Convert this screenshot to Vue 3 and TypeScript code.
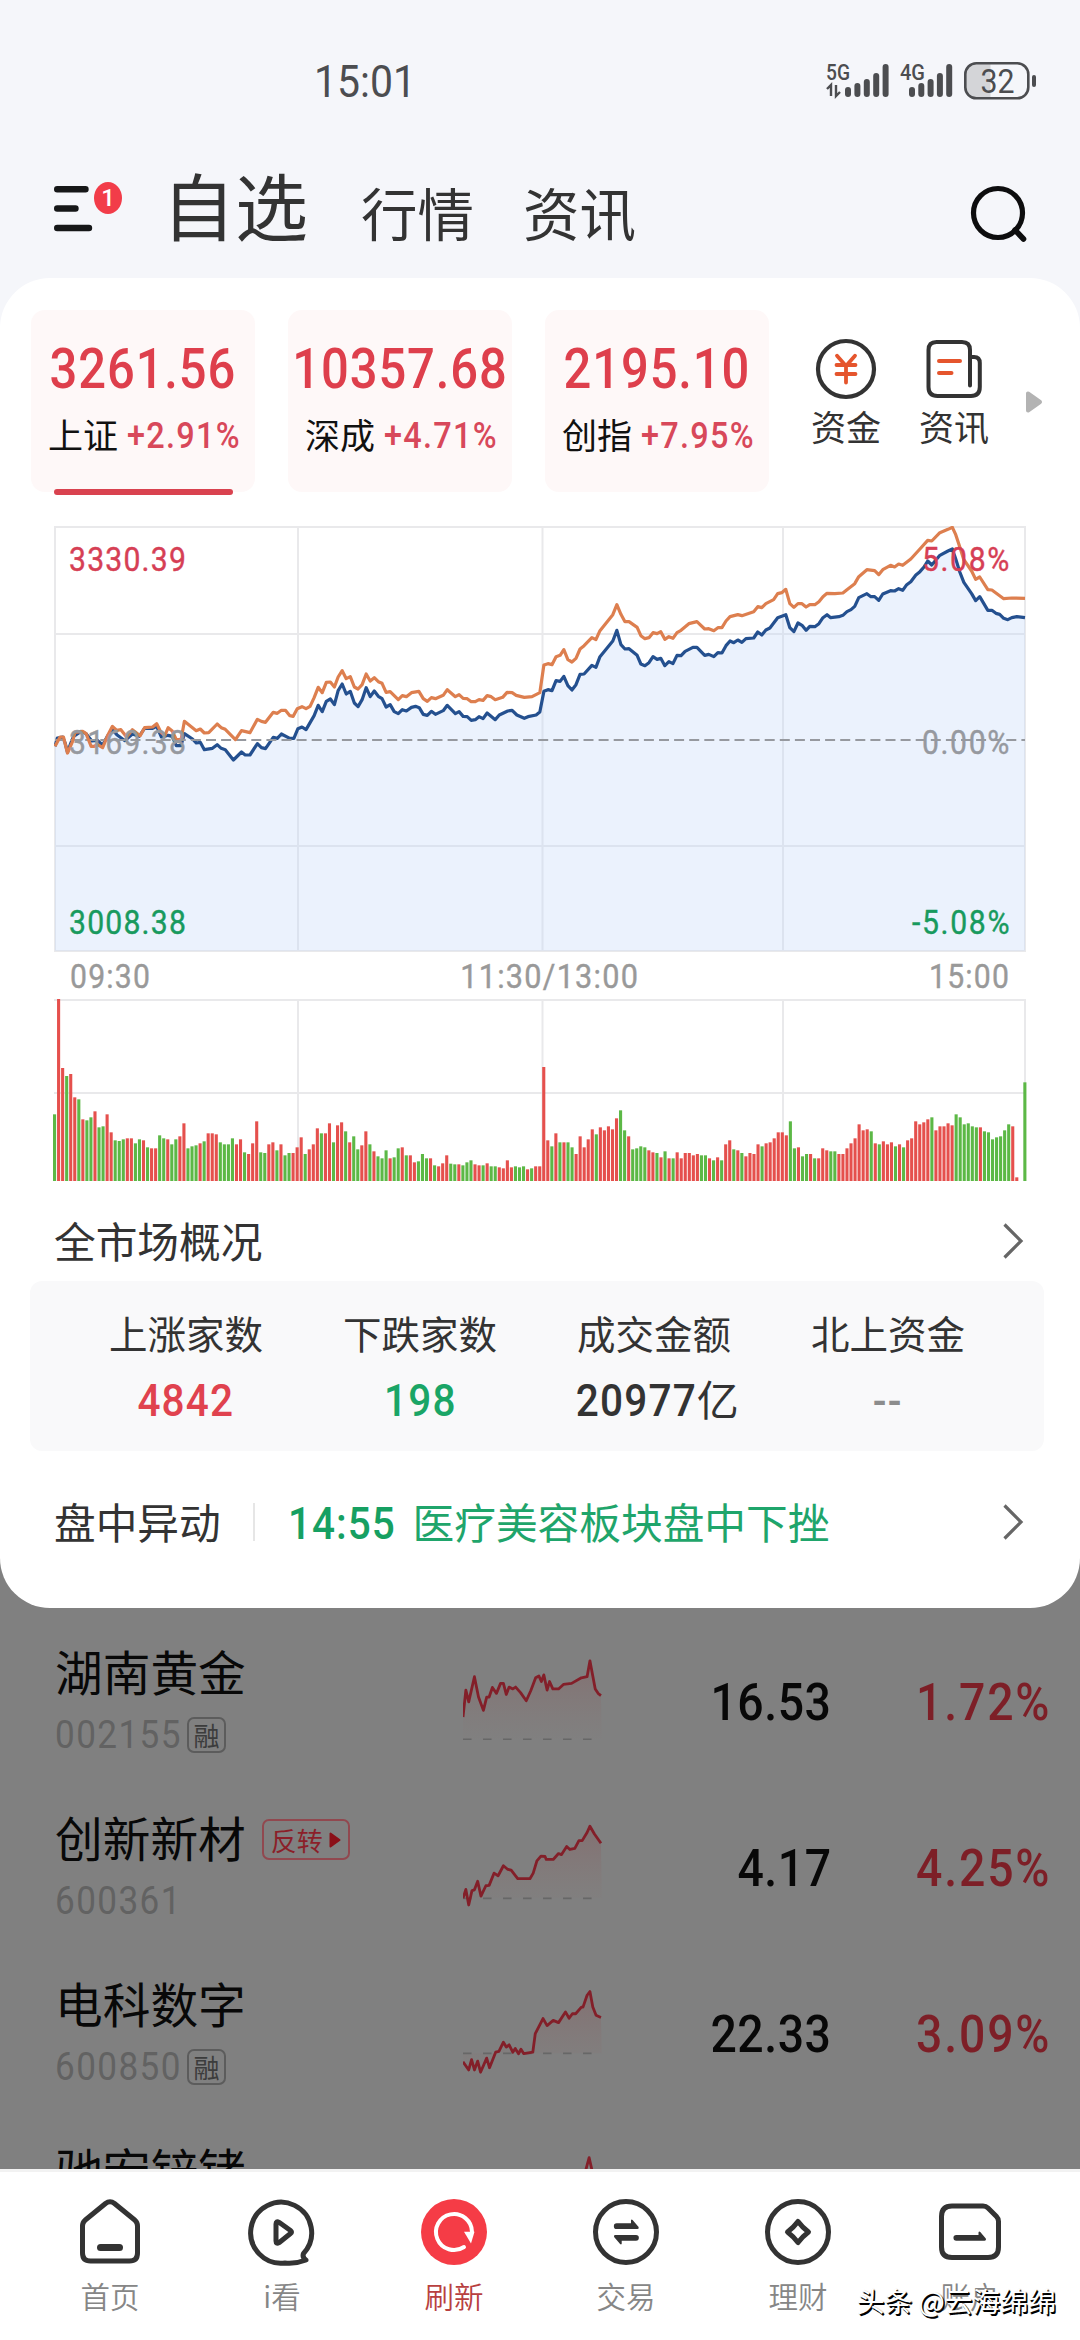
<script setup lang="ts">
interface IndexCard { value: string; name: string; change: string; active?: boolean }
interface Stat { label: string; value: string; unit?: string; tone: string }
interface Stock {
  name: string; code: string; margin?: boolean; tag?: string
  price: string; change: string; line: string; base: number
}

const indices: IndexCard[] = [
  { value: '3261.56', name: '上证', change: '+2.91%', active: true },
  { value: '10357.68', name: '深成', change: '+4.71%' },
  { value: '2195.10', name: '创指', change: '+7.95%' },
]

const stats: Stat[] = [
  { label: '上涨家数', value: '4842', tone: 'up' },
  { label: '下跌家数', value: '198', tone: 'down' },
  { label: '成交金额', value: '20977', unit: '亿', tone: 'flat' },
  { label: '北上资金', value: '--', tone: 'none' },
]

// Plot space of the intraday chart; the afternoon session is shifted to the right.
const AFTERNOON = 1479
function session(points: string, shift = 0): string {
  return points.trim().split(/\s+/).map((p) => {
    const [x, y] = p.split(',').map(Number)
    return `${x + shift},${y}`
  }).join(' ')
}

const blueMorning = '73,710 80,685 96,682 103,700 110,728 118,705 128,680 150,665 165,672 182,694 198,692 214,706 228,680 243,660 256,675 280,693 302,673 322,680 338,656 362,656 374,650 388,682 398,680 408,677 420,680 432,708 446,708 456,672 480,688 491,700 503,698 515,720 539,716 553,705 565,716 577,720 601,751 625,727 636,736 650,736 672,702 684,714 696,717 719,683 731,686 743,673 768,686 780,686 792,657 804,652 816,660 840,618 852,587 864,606 876,575 888,568 900,585 911,543 923,523 935,553 947,545 959,580 970,591 982,570 994,534 1006,561 1018,544 1030,560 1041,567 1053,592 1065,585 1077,606 1089,612 1101,600 1113,604 1128,593 1140,590 1151,594 1163,614 1175,617 1187,605 1199,614 1222,603 1234,587 1258,612 1269,606 1281,620 1293,621 1305,632 1317,630 1328,621 1340,627 1352,610 1376,630 1388,616 1413,604 1426,602 1440,616 1462,626 1473,621 1497,616'
const blueAfternoon = '29,607 41,545 53,540 65,543 77,513 89,515 100,500 112,528 124,541 136,525 148,494 160,493 183,467 195,473 207,441 245,394 257,362 269,405 281,418 293,417 317,437 328,463 340,468 352,459 364,441 376,449 387,446 399,468 411,456 423,462 435,437 447,438 459,425 482,413 494,413 517,437 529,434 544,441 556,429 568,430 580,408 592,394 603,399 615,391 627,398 639,387 662,385 674,367 686,376 698,361 710,355 733,324 757,315 769,354 781,366 793,340 805,347 817,362 828,350 843,351 855,342 867,324 879,315 890,324 914,321 926,317 938,306 950,300 961,290 973,264 997,252 1009,261 1020,261 1032,272 1044,253 1067,243 1079,244 1091,237 1103,242 1115,225 1127,216 1142,196 1154,186 1166,172 1177,154 1189,166 1213,137 1237,124 1250,118 1260,148 1272,187 1284,218 1307,252 1319,273 1331,261 1355,302 1367,302 1379,311 1390,314 1402,326 1414,330 1426,324 1441,321 1465,324'
const orangeMorning = '73,710 88,682 98,682 110,730 125,695 132,668 155,665 165,672 180,710 190,710 198,704 214,714 230,675 243,650 256,662 268,660 285,682 302,660 325,678 338,654 362,652 374,642 386,667 398,678 408,654 420,664 432,690 446,690 456,635 491,663 503,658 515,670 528,669 553,643 565,654 577,659 607,690 625,663 650,669 672,629 684,635 696,638 719,608 731,611 743,602 755,602 768,618 778,620 790,597 804,591 816,597 828,590 840,564 852,533 864,549 876,518 888,517 900,532 911,502 923,483 935,507 947,501 959,532 970,538 982,525 994,493 1006,514 1018,504 1030,516 1041,521 1053,548 1065,546 1089,570 1101,558 1113,561 1128,549 1150,545 1163,567 1175,575 1187,564 1199,567 1222,557 1234,540 1258,561 1269,555 1281,566 1293,567 1305,576 1317,576 1328,570 1340,572 1352,558 1364,561 1376,570 1398,563 1411,548 1426,549 1438,557 1462,563 1485,561'
const orangeAfternoon = '29,549 41,466 53,462 65,465 77,441 89,437 100,420 112,450 124,457 136,446 148,418 160,408 183,384 195,390 207,363 245,315 257,285 269,314 281,336 293,336 317,353 328,378 340,387 352,384 364,369 376,372 387,366 399,389 411,381 423,386 435,369 447,362 470,342 494,336 517,358 529,357 544,363 556,354 568,354 580,334 592,321 615,315 627,318 662,306 674,291 686,294 698,282 721,270 733,252 745,249 757,239 769,282 781,293 793,282 805,282 817,292 828,285 843,285 855,276 867,261 879,251 902,252 926,250 938,240 961,222 973,201 997,180 1020,183 1032,195 1044,180 1067,167 1079,172 1091,163 1103,167 1127,148 1154,118 1177,92 1189,94 1213,69 1237,59 1250,53 1260,75 1272,112 1284,150 1307,184 1319,209 1331,202 1355,240 1367,241 1402,267 1426,265 1465,266'
const blueLine = `${session(blueMorning)} ${session(blueAfternoon, AFTERNOON)}`
const orangeLine = `${session(orangeMorning)} ${session(orangeAfternoon, AFTERNOON)}`
const areaShape = `73,1323 ${blueLine} 2944,1323`

// One entry per minute: direction (r = up, g = down) and the bar's top edge; the floor is at 692.
const FLOOR = 692
const volume = ('g492 r146 r353 g377 r371 r441 g447 r507 g510 g501 r483 g531 g528 r492 r546 g570 g572 g567 r564 r564 g579 g567 r570 g591 r594 r594 g555 g564 r567 g582 '
  + 'g567 r558 r519 g594 g588 g585 r579 g573 r549 r549 r552 g576 g582 g582 g564 r582 r567 g606 r611 r579 r513 g606 g608 r582 r576 g600 r582 g615 g608 r608 '
  + 'r591 r561 g611 r597 r582 r534 g549 r549 r519 g576 r525 r516 g543 r576 g558 g597 r585 r543 g582 r603 g618 g624 g600 r624 g621 g594 r591 g615 r615 r636 '
  + 'g633 g611 g624 r624 g645 r648 r639 r615 g640 g642 r642 g645 g636 g630 r642 r645 g645 r639 g648 g648 r651 r654 r630 r651 g648 g651 g648 r657 g654 r648 '
  + 'r648 r350 r570 g588 r549 g576 r576 g576 g591 r611 r558 r591 r567 r537 g552 r531 r540 r528 r537 r504 g480 g540 r558 g597 g594 g588 g591 r600 r606 g608 '
  + 'r621 g603 r624 g624 r606 r624 r608 r608 r615 r611 g615 g615 r624 g630 r621 g630 r582 r570 g597 r600 g608 r618 r608 r611 r582 g588 r579 r576 r564 r546 '
  + 'r546 r555 g513 g594 r591 g618 g611 r611 g624 r624 r594 r600 g603 g603 r611 r611 r594 r579 r564 r522 r540 r537 g543 r579 g582 r573 r582 r576 g588 r582 '
  + 'g591 r570 r564 r513 r522 r516 r507 g501 r540 r528 r528 r519 r525 g492 g501 g522 g519 g528 g531 r531 g543 g546 g567 g561 g558 g540 g522 r528 r681 r692 g396')
  .split(' ')
  .map((t, i) => ({ x: i * 4.043, h: (FLOOR - Number(t.slice(1))) / 3, up: t[0] === 'r' }))

const stocks: Stock[] = [
  {
    name: '湖南黄金', code: '002155', margin: true, price: '16.53', change: '1.72%', base: 376,
    line: '1134,316 1141,243 1148,275 1162,207 1172,262 1184,298 1192,262 1198,262 1206,236 1216,252 1226,225 1233,225 1240,255 1247,235 1256,240 1263,235 1275,250 1289,272 1300,245 1312,210 1320,205 1326,220 1332,202 1340,243 1346,220 1354,240 1368,240 1380,228 1400,225 1424,210 1438,207 1445,164 1452,205 1458,240 1465,252 1472,258',
  },
  {
    name: '创新新材', code: '600361', tag: '反转', price: '4.17', change: '4.25%', base: 806,
    line: '1134,806 1141,782 1148,824 1156,785 1162,783 1170,760 1178,800 1190,772 1198,771 1210,738 1220,745 1233,718 1244,728 1252,730 1268,753 1298,753 1306,738 1315,705 1325,692 1335,693 1338,701 1355,701 1368,685 1375,688 1388,666 1396,674 1408,671 1418,650 1426,650 1438,628 1445,611 1456,632 1472,657',
  },
  {
    name: '电科数字', code: '600850', margin: true, price: '22.33', change: '3.09%', base: 1225,
    line: '1134,1248 1148,1270 1155,1242 1162,1270 1170,1246 1177,1276 1192,1238 1199,1264 1214,1222 1222,1220 1233,1195 1240,1208 1247,1202 1256,1222 1262,1212 1270,1226 1276,1214 1283,1226 1305,1222 1311,1172 1330,1131 1340,1150 1355,1136 1368,1142 1385,1113 1394,1130 1402,1118 1410,1118 1424,1100 1428,1100 1438,1068 1445,1058 1452,1100 1460,1122 1472,1128',
  },
  {
    name: '驰宏锌锗', code: '', price: '', change: '', base: 1660,
    line: '1430,1560 1443,1507 1454,1560',
  },
]

const signalBars = [10, 14, 18, 24, 33]
</script>

<template>
  <div class="screen">
    <header class="status">
      <span class="clock">15:01</span>
      <div class="indicators">
        <svg class="signal" width="66" height="40" viewBox="0 0 66 40">
          <text class="net" x="0" y="19" textLength="24" lengthAdjust="spacingAndGlyphs">5G</text>
          <path d="M1 28 L5 24 V35 M10 24 V35 L14 31" fill="none" stroke="#4c4d50" stroke-width="2.4" />
          <rect v-for="(h, i) in signalBars" :key="i" :x="19 + i * 9.4" :y="36 - h" width="6" :height="h" rx="3" />
        </svg>
        <svg class="signal second" width="60" height="40" viewBox="0 0 60 40">
          <text class="net" x="0" y="19" textLength="25" lengthAdjust="spacingAndGlyphs">4G</text>
          <rect v-for="(h, i) in signalBars" :key="i" :x="9 + i * 9.3" :y="36 - h" width="6" :height="h" rx="3" />
        </svg>
        <svg class="battery" width="74" height="40" viewBox="0 0 74 40">
          <path d="M27.5 2 V37 H13 Q3 37 3 27 V12 Q3 2 13 2Z" fill="#d4d5d8" />
          <rect x="2.3" y="2.3" width="63" height="35" rx="11" fill="none" stroke="#4c4d50" stroke-width="2.6" />
          <rect x="69" y="14" width="4" height="12" rx="2" />
          <text class="level" x="17.5" y="31.5" textLength="34" lengthAdjust="spacingAndGlyphs">32</text>
        </svg>
      </div>
    </header>

    <nav class="top">
      <div class="menu">
        <svg width="40" height="48" viewBox="0 0 40 48">
          <path d="M3.2 4.2 H31.5 M3.2 23.5 H21.5 M3.2 43 H35" stroke="#161718" stroke-width="6.4" stroke-linecap="round" />
        </svg>
        <span class="badge">1</span>
      </div>
      <span class="tab current">自选</span>
      <span class="tab">行情</span>
      <span class="tab">资讯</span>
      <svg class="search" width="58" height="58" viewBox="0 0 58 58">
        <circle cx="28" cy="28" r="24.5" fill="none" stroke="#0d0d0e" stroke-width="5.2" />
        <path d="M45 45 L53.5 54" stroke="#0d0d0e" stroke-width="5.6" stroke-linecap="round" />
      </svg>
    </nav>

    <section class="sheet">
      <div class="indices">
        <div v-for="c in indices" :key="c.name" class="card" :class="{ active: c.active }">
          <div class="quote"><span class="num">{{ c.value }}</span></div>
          <div class="delta"><span>{{ c.name }}</span><span class="num left">{{ c.change }}</span></div>
        </div>
        <div class="shortcut">
          <svg width="62" height="62" viewBox="0 0 62 62" fill="none" stroke-linecap="round" stroke-linejoin="round">
            <circle cx="31" cy="31" r="28" stroke="#333" stroke-width="4.2" />
            <path d="M22 17.7 L31 28 L40 17.7 M31 28 V44.6 M21.5 27 H40.5 M21.5 36 H40.5" stroke="#e5552d" stroke-width="3.8" />
          </svg>
          <span>资金</span>
        </div>
        <div class="shortcut">
          <svg width="62" height="62" viewBox="-1 -1 62 62" fill="none" stroke-linecap="round" stroke-linejoin="round">
            <path d="M46 46.5 V11 Q46 3 38 3 H12.5 Q4.5 3 4.5 11 V48 Q4.5 57 13.5 57 H47 Q55.8 57 55.8 48 V24 Q55.8 18 50 18 H46" stroke="#333" stroke-width="4" />
            <path d="M15 22 H36 M15 34 H27.5" stroke="#e5552d" stroke-width="4" />
          </svg>
          <span>资讯</span>
        </div>
        <svg class="more" width="18" height="24" viewBox="0 0 18 24">
          <path d="M3 3.5 V20.5 L15 12Z" fill="#b3b3b3" stroke="#b3b3b3" stroke-width="4" stroke-linejoin="round" />
        </svg>
      </div>

      <div class="trend">
        <svg class="plot" width="972" height="426" viewBox="0 0 972 426">
          <g fill="none" stroke="#e9e9eb" stroke-width="2">
            <rect x="1" y="1" width="970" height="424" />
            <path d="M1 108 H971 M1 320 H971 M244 1 V425 M488.500 1 V425 M729 1 V425" />
          </g>
          <svg x="1" y="1" width="970" height="424" viewBox="73 52 2871 1272" preserveAspectRatio="none" overflow="visible">
            <polygon :points="areaShape" fill="rgba(190, 214, 250, .31)" />
            <polyline class="stroke blue" :points="blueLine" />
          </svg>
          <path d="M1 214 H971" stroke="#96999f" stroke-width="2" stroke-dasharray="10 5.100" />
          <svg x="1" y="1" width="970" height="424" viewBox="73 52 2871 1272" preserveAspectRatio="none" overflow="visible">
            <polyline class="stroke orange" :points="orangeLine" />
          </svg>
        </svg>
        <div class="scale">
          <div class="pair up"><span class="num left">3330.39</span><span class="num right">5.08%</span></div>
          <div class="pair mid"><span class="num left">3169.38</span><span class="num right">0.00%</span></div>
          <div class="pair down"><span class="num left">3008.38</span><span class="num right">-5.08%</span></div>
        </div>
      </div>
      <div class="times">
        <span class="num left">09:30</span><span class="num noon">11:30/13:00</span><span class="num right">15:00</span>
      </div>
      <svg class="volume" width="974" height="183" viewBox="0 0 974 183">
        <path d="M1 1 H972 V182 M1 94 H972 M245 1 V182 M489.500 1 V182 M730 1 V182" fill="none" stroke="#e9e9eb" stroke-width="2" />
        <rect v-for="(b, i) in volume" :key="i" :x="b.x" :y="182 - b.h" width="3.100" :height="b.h" :fill="b.up ? '#e5504d' : '#5cb846'" />
      </svg>

      <div class="row market">
        <span>全市场概况</span>
        <svg class="chev" width="22" height="38" viewBox="0 0 22 38"><path d="M2.500 2.500 L19 19 L2.500 35.500" /></svg>
      </div>
      <div class="stats">
        <div v-for="s in stats" :key="s.label" class="stat">
          <span class="label">{{ s.label }}</span>
          <span class="value" :class="s.tone"><span class="num">{{ s.value }}</span><i v-if="s.unit">{{ s.unit }}</i></span>
        </div>
      </div>
      <div class="row alert">
        <span>盘中异动</span>
        <span class="bar"></span>
        <span class="num left time">14:55</span>
        <span class="news">医疗美容板块盘中下挫</span>
        <svg class="chev" width="22" height="38" viewBox="0 0 22 38"><path d="M2.500 2.500 L19 19 L2.500 35.500" /></svg>
      </div>
    </section>

    <section class="list">
      <div v-for="(s, k) in stocks" :key="s.name" class="stock">
        <div class="ident">
          <div class="name">
            <span>{{ s.name }}</span>
            <span v-if="s.tag" class="tag">{{ s.tag }}<svg width="12" height="16" viewBox="0 0 12 16"><path d="M1.500 1.500 V14.500 L10.500 8Z" /></svg></span>
          </div>
          <div class="code">
            <span class="num left">{{ s.code }}</span><span v-if="s.margin" class="margin">融</span>
          </div>
        </div>
        <svg class="spark" width="140" height="166" :viewBox="`1134 ${51 + 448.7 * k} 343 448.7`" preserveAspectRatio="none">
          <defs>
            <linearGradient :id="`g${k}`" x1="0" y1="0" x2="0" y2="1">
              <stop offset="0" stop-color="#8b4a4e" stop-opacity=".3" />
              <stop offset="1" stop-color="#8b6a66" stop-opacity=".02" />
            </linearGradient>
          </defs>
          <polygon v-if="s.code" :points="`1134,${s.base} ${s.line} 1474,${s.base}`" :fill="`url(#g${k})`" />
          <path :d="`M1134 ${s.base} H1452`" stroke="#676767" stroke-width="4.500" stroke-dasharray="21 28" />
          <polyline class="stroke red" :points="s.line" />
        </svg>
        <span class="price"><span class="num right">{{ s.price }}</span></span>
        <span class="pct"><span class="num right">{{ s.change }}</span></span>
      </div>
    </section>

    <footer class="tabs">
      <div class="item">
        <svg width="72" height="72" viewBox="0 0 72 72" class="line">
          <path d="M8.500 30 Q8.500 26.500 11 24.300 L31.500 7.500 Q36 4 40.500 7.500 L61 24.300 Q63.500 26.500 63.500 30 V57 Q63.500 65 55.500 65 H16.500 Q8.500 65 8.500 57 Z" />
          <path d="M26.500 51.500 H45.500" stroke-width="7" />
        </svg>
        <span>首页</span>
      </div>
      <div class="item">
        <svg width="72" height="72" viewBox="0 0 72 72" class="line">
          <path d="M57.500 57.500 A30.500 30.500 0 1 0 39 67 Q50 68 60 64 Q56 61.500 57.500 57.500 Z" />
          <path d="M30 28 Q30 24.500 33 26.300 L44.500 34.500 Q46.500 36 44.500 37.500 L33 46.700 Q30 48.500 30 45 Z" />
        </svg>
        <span>i看</span>
      </div>
      <div class="item on">
        <svg width="72" height="72" viewBox="0 0 72 72">
          <circle cx="36" cy="36" r="33" fill="#f53c46" />
          <path d="M46 51 A18 18 0 1 1 54 36" fill="none" stroke="#fff" stroke-width="4" stroke-linecap="round" />
          <path d="M46 35.700 H56.500 L53 47.500Z" fill="#fff" />
        </svg>
        <span>刷新</span>
      </div>
      <div class="item">
        <svg width="72" height="72" viewBox="0 0 72 72" class="line">
          <circle cx="36" cy="36" r="30.500" />
          <path class="solid" d="M26.700 27.300 H41 V24.200 Q41.500 23 42.600 24 L48.600 31 Q49.300 33 47.500 33 H26.700 A2.850 2.850 0 0 1 26.700 27.300Z" />
          <path class="solid" d="M46 44.700 H31.700 V47.800 Q31.200 49 30.100 48 L24.100 41 Q23.400 39 25.200 39 H46 A2.850 2.850 0 0 1 46 44.700Z" />
        </svg>
        <span>交易</span>
      </div>
      <div class="item">
        <svg width="72" height="72" viewBox="0 0 72 72" class="line">
          <circle cx="36" cy="36" r="30.500" />
          <path d="M36 25.500 Q40 31 46.500 36 Q40 41 36 46.500 Q32 41 25.500 36 Q32 31 36 25.500Z" />
        </svg>
        <span>理财</span>
      </div>
      <div class="item">
        <svg width="72" height="72" viewBox="0 0 72 72" class="line">
          <path d="M18 10 H49 Q52 10 54 12 L62.500 20.500 Q64.500 22.500 64.500 25.500 V51 Q64.500 61.500 54 61.500 H18 Q7.500 61.500 7.500 51 V20.500 Q7.500 10 18 10Z" />
          <path class="solid" d="M22.300 39 H44.500 V36.500 Q45 35 46.300 36 L51.800 42.600 Q52.500 44.700 50.500 44.700 H22.300 A2.850 2.850 0 0 1 22.300 39Z" />
        </svg>
        <span>账户</span>
      </div>
      <span class="credit">头条 @云海绵绵</span>
    </footer>
  </div>
</template>

<style>
html, body { margin: 0; background: #fff; }
</style>

<style scoped>
.screen {
  width: 1080px; height: 2340px; overflow: hidden;
  display: flex; flex-direction: column;
  background: linear-gradient(#f5f6fa 400px, #808080 400px);
  font-family: "Noto Sans CJK SC", sans-serif; color: #333;
  white-space: nowrap;
}
svg { display: block; flex: none; }
.num {
  display: inline-block; font-family: Roboto, sans-serif; font-weight: 500;
  letter-spacing: .04em; transform: scaleX(.9); transform-origin: 50% 50%;
}
.num.left { transform-origin: 0 50%; }
.num.right { transform-origin: 100% 50%; margin-right: -.04em; }

.status { height: 120px; display: flex; align-items: flex-start; box-sizing: border-box; padding: 61px 43px 0 314px; justify-content: space-between; flex: none; }
.clock { font: 400 45px/42px Roboto, sans-serif; color: #4c4d50; transform: scaleX(.91); transform-origin: 0 50%; }
.indicators { display: flex; }
.signal { fill: #4c4d50; }
.signal.second { margin-left: 8px; }
.battery { fill: #4c4d50; margin-left: 3px; }
.net { font: 500 22px Roboto, sans-serif; }
.level { font: 400 33px Roboto, sans-serif; }

.top { height: 158px; flex: none; display: flex; align-items: flex-start; box-sizing: border-box; padding: 35px 52px 0 54px; }
.menu { position: relative; width: 108px; padding-top: 30px; }
.badge {
  position: absolute; left: 40px; top: 27px; width: 28px; height: 32px; border-radius: 50%;
  background: #f23c49; color: #fff; font: 500 24px/32px Roboto, sans-serif; text-align: center;
}
.tab { font-size: 56.500px; line-height: 96px; margin: 8px 49px 0 0; }
.tab.current { font-size: 73px; line-height: 84px; margin: 6px 53px 0 0; }
.search { margin-left: auto; margin-top: 30px; }

.sheet { height: 1330px; flex: none; background: #fff; border-radius: 50px; box-sizing: border-box; padding-top: 32px; display: flex; flex-direction: column; }
.indices { height: 182px; display: flex; padding-left: 31px; }
.card { position: relative; width: 224px; margin-right: 33px; background: #fef8f8; border-radius: 14px; }
.card.active::after { content: ""; position: absolute; left: 23px; right: 22px; bottom: -3px; height: 6px; border-radius: 3px; background: #d9424f; }
.quote { display: flex; justify-content: center; margin-top: 29px; font-size: 55px; line-height: 61px; color: #de3f4c; }
.quote .num { letter-spacing: .018em; margin: 0 -10px; transform: scaleX(.89); }
.delta { display: flex; gap: 9px; padding-left: 17px; font-size: 35px; line-height: 50px; margin-top: 9px; color: #111; }
.delta .num { font-size: 36px; color: #d8485a; line-height: 54px; }
.shortcut { width: 70px; display: flex; flex-direction: column; align-items: center; padding-top: 28px; margin-left: 9px; margin-right: 29px; font-size: 35px; line-height: 50px; }
.shortcut span { margin-top: 1px; }
.more { margin-top: 80px; margin-left: 7px; }

.trend { margin: 34px 0 0 54px; width: 972px; display: grid; }
.trend > * { grid-area: 1 / 1; }
.stroke { fill: none; stroke-width: 3.2px; stroke-linejoin: round; vector-effect: non-scaling-stroke; }
.blue { stroke: #24508f; }
.orange { stroke: #dd7f4f; }
.red { stroke: #831f29; stroke-width: 2.8px; }
.scale { padding: 14px 17px 0 15px; font-size: 33.500px; line-height: 40px; }
.scale .right { letter-spacing: .055em; margin-right: -.055em; }
.pair { display: flex; justify-content: space-between; }
.scale .num, .times .num { font-weight: 400; -webkit-text-stroke: .4px currentColor; }
.pair.up { color: #d63f55; }
.pair.mid { color: #96999f; margin-top: 143px; }
.pair.down { color: #189a5e; margin-top: 140px; }
.times { display: flex; justify-content: space-between; margin: 5px 71px 0 70px; font-size: 33.500px; line-height: 40px; color: #999; height: 42px; box-sizing: border-box; }
.times .noon { transform: translateX(10px) scaleX(.915); }
.volume { margin: 0 0 0 53px; }

.row { display: flex; align-items: center; padding: 0 56px 0 54px; font-size: 41.700px; }
.row > span:first-child { margin-top: -3px; }
.market { height: 98px; box-sizing: border-box; padding-top: 20px; }
.chev { margin-left: auto; fill: none; stroke: #666; stroke-width: 3.2px; }
.stats { margin: 1px 36px 0 30px; height: 170px; background: #f9f9fa; border-radius: 12px; display: flex; padding-left: 39px; box-sizing: border-box; }
.stat { width: 234px; display: flex; flex-direction: column; align-items: center; padding-top: 27px; }
.label { font-size: 38.500px; line-height: 48px; }
.value { display: flex; align-items: baseline; font-size: 45px; line-height: 56px; margin-top: 17px; }
.value .num { letter-spacing: .03em; }
.value i { font-style: normal; font-size: 42px; line-height: 48px; }
.value.up { color: #e0424e; }
.value.down { color: #1aa566; }
.value.flat .num { margin-right: -7px; }
.value.none { color: #8c8c8c; }
.alert { height: 76px; margin-top: 33px; }
.bar { width: 2px; height: 38px; background: #e6e6e6; margin-left: 32px; margin-right: 33px; }
.time { font-size: 45px; color: #16a062; letter-spacing: .025em; margin-top: 2px; }
.news { margin: -3px 0 0 5px; color: #1fa56b; }

.list { height: 561px; flex: none; overflow: hidden; background: #808080; padding-top: 11px; box-sizing: border-box; }
.stock { height: 166px; display: flex; align-items: center; box-sizing: border-box; padding: 0 31px 0 55px; color: #080808; }
.ident { width: 408px; height: 166px; display: flex; flex-direction: column; }
.name { display: flex; align-items: center; font-size: 47.700px; line-height: 60px; margin-top: 22px; height: 60px; }
.tag { display: flex; align-items: center; gap: 6px; margin: 5px 0 0 16px; padding: 0 7px; height: 37px; border: 2px solid #91484f; border-radius: 7px; color: #8b1f29; font-size: 26px; line-height: 37px; }
.tag svg { fill: #8b1018; stroke: #8b1018; stroke-width: 2px; stroke-linejoin: round; }
.code { display: flex; align-items: center; margin-top: 12px; height: 44px; font-size: 39px; line-height: 44px; color: #626262; }
.code .num { font-weight: 400; width: 132px; }
.margin { width: 35px; height: 32px; border: 2px solid #5c5c5c; border-radius: 7px; color: #3c3c3c; font-size: 26px; line-height: 31px; text-align: center; }
.price, .pct { text-align: right; font-size: 51.500px; line-height: 60px; margin-bottom: 3px; }
.price { width: 228px; }
.price .num { letter-spacing: .012em; margin-right: -.012em; }
.pct { margin-left: auto; color: #7d1f27; }

.tabs { position: relative; flex: none; height: 171px; box-sizing: border-box; border-top: 3px solid #f2f2f2; background: #fff; display: flex; padding: 24px 24px 0; }
.item { width: 172px; display: flex; flex-direction: column; align-items: center; font-size: 29.500px; line-height: 40px; color: #868686; font-weight: 350; }
.item span { margin-top: 7px; }
.item.on { color: #b8403f; }
.line { fill: none; stroke: #333; stroke-width: 5px; stroke-linejoin: round; stroke-linecap: round; }
.line .solid { fill: #333; stroke: none; }
.line path[stroke-width] { stroke-width: 7px; }
.credit { position: absolute; right: 24px; bottom: 20px; font-size: 27.800px; line-height: 40px; color: #fff; text-shadow: 1.5px 1.5px 0 #000, 1px 1px 1px #000; }
</style>
